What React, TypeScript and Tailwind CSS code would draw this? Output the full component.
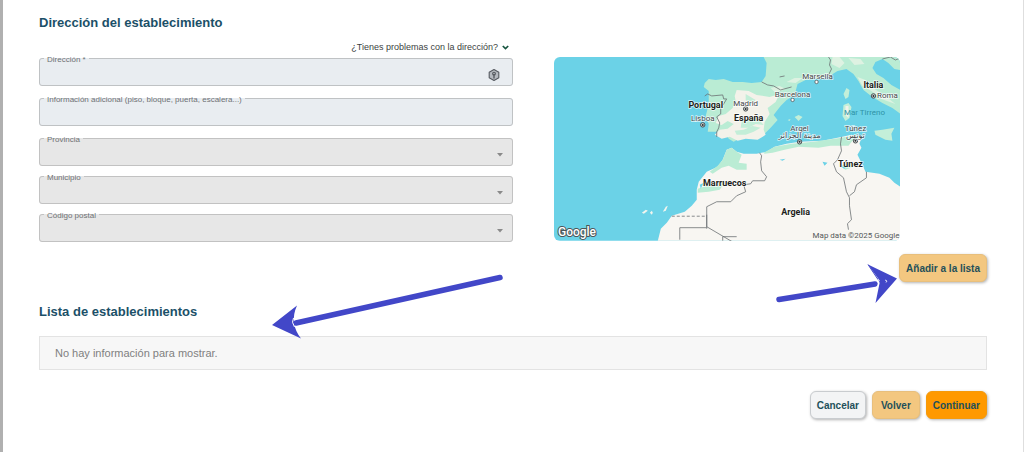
import React from 'react';
import { clsx } from 'clsx';

const outline = 'min-w-0 rounded-[3px] border pb-0 text-[#6f7275]';
const heading = 'text-[13px] font-bold leading-4 text-[#1b5068]';
const actionButton =
  'flex h-7 items-center justify-center rounded-md border text-[10px] font-bold text-[#23505a] shadow-[1px_1px_3px_rgba(0,0,0,0.3)]';

function FieldLabel({ id, children }: { id: string; children: React.ReactNode }) {
  return (
    <legend className="ml-1 px-[3px] pt-1 text-[8px] leading-[10px]">
      <label htmlFor={id} className="block">{children}</label>
    </legend>
  );
}

function TextField({ id, label, icon }: { id: string; label: string; icon?: React.ReactNode }) {
  return (
    <fieldset className={clsx(outline, 'border-[#bfc2c4] bg-[#e9edf1]')}>
      <FieldLabel id={id}>{label}</FieldLabel>
      <div className="flex h-5 items-center pr-3">
        <input id={id} type="text" className="h-5 min-w-0 flex-1 bg-transparent px-2 text-[10px] outline-none" />
        {icon}
      </div>
    </fieldset>
  );
}

function SelectField({ id, label }: { id: string; label: string }) {
  return (
    <fieldset className={clsx(outline, 'border-[#c2c2c2] bg-[#e7e7e7]')}>
      <FieldLabel id={id}>{label}</FieldLabel>
      <div className="relative h-5">
        <select id={id} disabled className="h-5 w-full appearance-none bg-transparent px-2 text-[10px]">
          <option value=""></option>
        </select>
        <svg className="pointer-events-none absolute right-2 top-2 h-1 w-2" viewBox="0 0 8 4" aria-hidden="true">
          <path d="M1 0h6L4 3.5z" fill="#8a8a8a" />
        </svg>
      </div>
    </fieldset>
  );
}

function HexIcon() {
  return (
    <svg className="h-3 w-3" viewBox="0 0 12 12" aria-hidden="true">
      <path d="M6 .6 10.8 3.3v5.4L6 11.4 1.2 8.7V3.3z" fill="#b5b9bf" stroke="#565a60" strokeWidth="1.1" strokeLinejoin="round" />
      <circle cx="6" cy="4.7" r="1.9" fill="#565a60" />
      <circle cx="6" cy="4.4" r=".7" fill="#c9cdd2" />
      <path d="M5.3 6h1.4v3.4H5.3z" fill="#565a60" />
    </svg>
  );
}

const countries = [
  { name: 'Portugal', x: 706, y: 108 },
  { name: 'España', x: 749, y: 121 },
  { name: 'Italia', x: 874, y: 88 },
  { name: 'Túnez', x: 851, y: 167 },
  { name: 'Marruecos', x: 725, y: 186 },
  { name: 'Argelia', x: 796, y: 215 },
];

const cities = [
  { name: 'Lisboa', x: 703, y: 121 },
  { name: 'Madrid', x: 746, y: 106 },
  { name: 'Barcelona', x: 793, y: 97 },
  { name: 'Marsella', x: 818, y: 79 },
  { name: 'Roma', x: 888, y: 98 },
  { name: 'Argel', x: 800, y: 131 },
  { name: 'مدينة الجزائر', x: 800, y: 138 },
  { name: 'Túnez', x: 856, y: 131 },
  { name: 'تونس', x: 856, y: 138 },
];

const capitals = [[703, 125], [746, 109], [874, 96], [800, 142], [856, 141]];
const ports = [[793, 100], [817, 82]];

function LocationMap() {
  return (
    <svg
      className="block h-auto w-4/5 rounded-md"
      viewBox="554 57 347 184"
      role="img"
      aria-label="Mapa"
      fontFamily='"Roboto", "DejaVu Sans", sans-serif'
    >
      <path d="M554 57h347v184H554z" fill="#6bd2e7" />

      {/* Europe */}
      <path d="M704 87l1-4 4-4 7 1 8-1 9 3 10 0 9 1 10-1 4-6 1-13-3-6H901v13l-6-1-6-6-6-4-7 3-3 6 4 6 7 4 8 7 9 5v24l-8-6-10-5-10-6-9-7-5-9-5-7-7-5-9 2-8 5-9 3-7 0-8 1-8 4-3 11-8 5-6 6-7 9 4 5-7 8-7 7-12 1-11 2-7 4-5-3-3-6-9-1-9 0 1-8-3-8 3-12 0-13z" fill="#baecd4" />
      <path d="M737 90l12 1 8 4 13 2 10-3-4 8-8 6 2 6-5 8-1 8 2 5-8 5-12-1-8 2-8-4-8 2-7-4 5-5 8-1 6-5-6-3-6 4-6-2 3-7 7-2 7-6 3-7-1-5z" fill="#f3f2ea" />
      <path d="M742 121l9-4 8 2 5 6-8-1-7 4-8 0zM735 131l9-1 9-4 8 2-7 4-8 3-9 0zM746 94l10 6-4 4-6-4z" fill="#c3eed8" />
      <path d="M771 88l9-2 6 3-10 4zM787 82l8-4 8 0-7 5zM833 57l7 0 5 6-5 5-8-4zM849 58l12 1 4 5-10 1zM858 77l8 3 9 9 11 7 10 8-14-5-10-8-9-5z" fill="#def2e2" />

      {/* Africa */}
      <path d="M727 150l5-2 5 4 7 2 13 0 10-2 8-5 12-3 13-2 23-1 20-4 9-2 10 3-2 6 2 4-4 7 5 10 3 7 14 2 10 4 5 5 6 4v54H658l3-12 6-6 5-7 13-4 7-6 5-6 0-10 2-8 8-10 11-5 5-7z" fill="#f8f6f2" />
      <path d="M727 150l5-2 5 4 5 3-3 8 8 1 0 6-10 0-8-4-7 2-9 6-3-2 8-6 5-6zM698 189l9-3 8 0 4-4 6 1-5 7-11 2-11 1zM764 153l11-6 17-3 22-2 28-4 15-3 5 3-9 3-4 5-18 0-12 2-20-1-14 3-12 3-8 1zM840 166l11-3 3 4-8 3z" fill="#baecd4" />
      <path d="M780 160l6-1-3 2zM823 162l5 1-3 3zM841 167l7-1-3 3zM700 185l4-2-3 6z" fill="#6bd2e7" />

      {/* Islands */}
      <path d="M847 88l3 2-1 7-3 2-2-5zM844 105l5-2 3 4-2 11-4 3-3-5zM875 131l8-1 12-2-3 6 1 7-7-1-10-5zM795 117l4-2 4 2-4 4zM788 120l3-1-1 2z" fill="#c3efd9" />
      <path d="M846 106l3 0 0 12-3-3z" fill="#f3f2ea" />
      <path d="M642 213l4-3 2 1-4 3zM650 213l2-2 1 2-1 2zM663 212l3-5 2-1-2 5z" fill="#f1f5ee" />

      {/* Borders */}
      <g fill="none" stroke="#6b7072" strokeWidth=".8">
        <path d="M705 96l3-2 4 2 11-1 1 4 3 0-3 5-3 4 0 6-4 3 3 6-1 5-2 4 0 5M762 82l6 3 6 1 7 4 11-3M829 57l2 3-1 5 2 4-3 6 3 5M780 77l5-1M883 59l8-2 5 3 5-2" />
        <path d="M760 153l2 3-1 6 1 9 5 6-2 4-12 0-2 3-7 1 2 7-9 4-6 6-14 0-10 5v20l34 20M707 228h-27v12M707 215v14M723 241v-4h14M842 137l-1 7 1 7-4 9-4 4 3 8 7 6 3 14 3 6 0 8 2 14-4 4 1 6M850 196l5-4 2-7 10-7 0-6" />
        <path d="M672 216.500h35" strokeDasharray="3 2" />
      </g>

      {capitals.map(([cx, cy]) => (
        <g key={`${cx}-${cy}`}>
          <circle cx={cx} cy={cy} r="2.2" fill="#d7dcda" stroke="#3c4043" strokeWidth=".9" />
          <circle cx={cx} cy={cy} r="1" fill="#2b2f31" />
        </g>
      ))}
      {ports.map(([cx, cy]) => (
        <circle key={cx} cx={cx} cy={cy} r="1.7" fill="#fff" stroke="#555a5c" strokeWidth=".8" />
      ))}

      <g textAnchor="middle" stroke="#fff" strokeOpacity=".75" strokeWidth="1.5" paintOrder="stroke">
        <g fontSize="8" fill="#45484b">
          {cities.map((c) => (
            <text key={`${c.name}-${c.x}`} x={c.x} y={c.y}>{c.name}</text>
          ))}
        </g>
        <g fontSize="9" fontWeight="700" fill="#1c1e20">
          {countries.map((c) => (
            <text key={c.name} x={c.x} y={c.y}>{c.name}</text>
          ))}
        </g>
      </g>
      <text x="865" y="115" textAnchor="middle" fontSize="8" fill="#2f93a6">Mar Tirreno</text>
      <text x="900" y="238" textAnchor="end" fontSize="8" fill="#55585a">Map data ©2025 Google</text>
      <text x="558" y="236" fontSize="12" fontWeight="500" fill="#fff" stroke="#4b5557" strokeWidth="2" paintOrder="stroke">Google</text>
    </svg>
  );
}

export default function App() {
  return (
    <div className="relative min-h-screen border-l-[3px] border-r border-l-[#b0b0b0] border-r-[#dedede] bg-white px-9 pb-8 font-['Liberation_Sans',sans-serif]">
      <h2 className={clsx(heading, 'pt-[15px]')}>Dirección del establecimiento</h2>

      <div className="grid grid-cols-2">
        <div>
          <div className="flex justify-end pr-1 pt-3">
            <button type="button" className="flex h-2 items-center gap-1 text-[9px] leading-none text-[#3c3f41]">
              ¿Tienes problemas con la dirección?
              <svg className="h-[5px] w-[7px]" viewBox="0 0 7 5" aria-hidden="true">
                <path d="M.8 1 3.500 3.600 6.200 1" fill="none" stroke="#17543f" strokeWidth="1.700" />
              </svg>
            </button>
          </div>
          <div className="flex flex-col gap-[5px]">
            <TextField id="direccion" label="Dirección *" icon={<HexIcon />} />
            <TextField id="adicional" label="Información adicional (piso, bloque, puerta, escalera...)" />
            <div className="flex flex-col gap-[3px]">
              <SelectField id="provincia" label="Provincia" />
              <SelectField id="municipio" label="Municipio" />
              <SelectField id="postal" label="Código postal" />
            </div>
          </div>
        </div>
        <div className="pl-[41px] pt-[26px]">
          <LocationMap />
        </div>
      </div>

      <div className="mt-3 flex justify-end">
        <button type="button" className={clsx(actionButton, 'border-[#e8bf7c] bg-[#f3c780] px-1.5')}>Añadir a la lista</button>
      </div>

      <h2 className={clsx(heading, 'mt-[22px]')}>Lista de establecimientos</h2>
      <p className="mt-4 border border-[#e3e3e3] bg-[#f7f7f7] px-[15px] py-2 text-[11px] leading-4 text-[#808080]">
        No hay información para mostrar.
      </p>

      <div className="mt-[21px] flex justify-end gap-1.5">
        <button type="button" className={clsx(actionButton, 'border-[#c9cccf] bg-[#f3f4f5] px-1.5')}>Cancelar</button>
        <button type="button" className={clsx(actionButton, 'border-[#e8bf7c] bg-[#f3c780] px-2')}>Volver</button>
        <button type="button" className={clsx(actionButton, 'border-[#f59a0a] bg-[#ff9900] px-1.5')}>Continuar</button>
      </div>

      {/* Pointer arrows laid over the form */}
      <svg className="pointer-events-none absolute left-[268px] top-[272px] h-[70px] w-[236px]" viewBox="271 272 236 70" aria-hidden="true">
        <path d="M500 277.500 296 323" stroke="#4247c8" strokeWidth="5.500" strokeLinecap="round" />
        <path d="M272 325 297 305.500Q289 323 301 338.500z" fill="#4247c8" />
        <path d="M293.500 318q-2.500 4 1 9" fill="none" stroke="#fff" strokeWidth="1" />
      </svg>
      <svg className="pointer-events-none absolute right-[125px] top-[260px] h-[46px] w-[124px]" viewBox="774 260 124 46" aria-hidden="true">
        <path d="M779 299.500 875 284" stroke="#4247c8" strokeWidth="5.500" strokeLinecap="round" />
        <path d="M897 278.500 868 264.500 880 281 875.500 303z" fill="#4247c8" />
        <path d="M868 264.500 881 284" stroke="#4247c8" strokeWidth="1" />
        <path d="M878 279q2 4-1 8M885 280l2 1-1 1.500" fill="none" stroke="#fff" strokeWidth=".8" />
      </svg>
    </div>
  );
}
